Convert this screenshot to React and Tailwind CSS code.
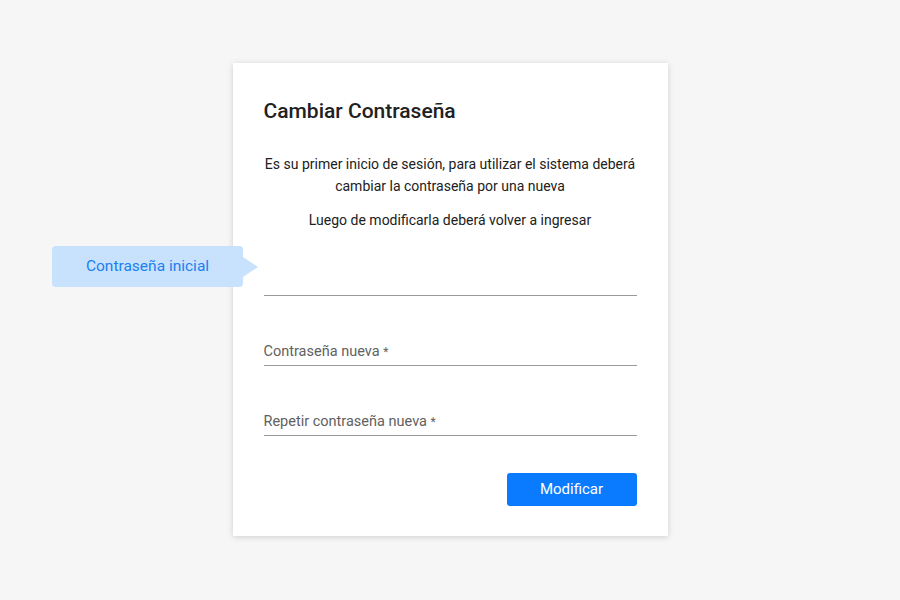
import { useState } from 'react';

function Campo({ label, value, onChange }) {
    return (
        <div className="relative h-[40px] border-b border-[#9a9a9a] flex items-end pb-[3px]">
            {label && (
                <span className="text-[14.5px] text-[#616161] leading-[20px]">
                    {label} <span className="text-[12px]">*</span>
                </span>
            )}
        </div>
    );
}

function App() {
    const [form, setForm] = useState({ inicial: '', nueva: '', repetir: '' });

    return (
        <div
            className="relative w-full h-[600px] bg-[#f6f6f6] pt-[63px]"
            style={{ fontFamily: 'Roboto, "Noto Sans", sans-serif' }}
        >
            <div className="mx-auto w-[435px] h-[473px] bg-white shadow-[0_1px_6px_rgba(0,0,0,0.16)] px-[31px] pt-[34px]">
                <h2 className="text-[21px] leading-[28px] font-medium text-[#212121]">
                    Cambiar Contraseña
                </h2>
                <p className="mt-[28px] -mx-[4px] whitespace-nowrap text-center text-[14px] leading-[22px] text-[#212121]">
                    Es su primer inicio de sesión, para utilizar el sistema deberá
                    <br />
                    cambiar la contraseña por una nueva
                </p>
                <p className="mt-[12px] text-center text-[14px] leading-[22px] text-[#212121]">
                    Luego de modificarla deberá volver a ingresar
                </p>
                <div className="mt-[25px] flex flex-col gap-[30px]">
                    <Campo />
                    <Campo label="Contraseña nueva" />
                    <Campo label="Repetir contraseña nueva" />
                </div>
                <div className="mt-[37px] flex justify-end">
                    <button className="w-[130px] h-[33px] rounded-[3px] bg-[#0a7bff] text-white text-[15px]">
                        Modificar
                    </button>
                </div>
            </div>

            {/* tooltip */}
            <div className="absolute left-[52px] top-[246px] flex items-center">
                <div className="w-[191px] h-[41px] rounded-[4px] bg-[#c8e2fe] flex items-center justify-center text-[15.5px] text-[#1a7ff0]">
                    Contraseña inicial
                </div>
                <div className="w-0 h-0 border-y-[10px] border-y-transparent border-l-[15px] border-l-[#c8e2fe]" />
            </div>
        </div>
    );
}

export default App;
